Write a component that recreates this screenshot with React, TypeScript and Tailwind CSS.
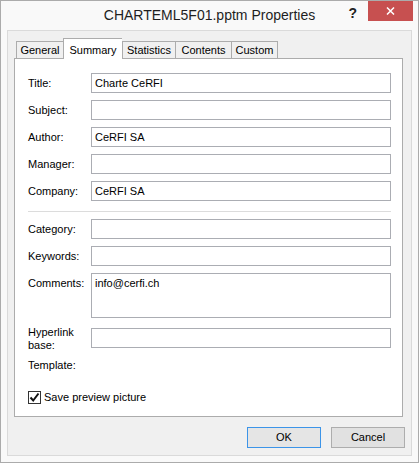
import React from "react"

const fields: { label: string; value?: string }[] = [
  { label: "Title:", value: "Charte CeRFI" },
  { label: "Subject:" },
  { label: "Author:", value: "CeRFI SA" },
  { label: "Manager:" },
  { label: "Company:", value: "CeRFI SA" },
]

const tabs = [
  { name: "General", w: "w-[47px]" },
  { name: "Summary", w: "w-[59px]", active: true },
  { name: "Statistics", w: "w-[53px]" },
  { name: "Contents", w: "w-[56px]" },
  { name: "Custom", w: "w-[47px]", last: true },
]

function Field({ label, value }: { label: string; value?: string }) {
  return (
    <div className="flex items-center h-[20px]">
      <div className="w-[63px] shrink-0">{label}</div>
      <div className="w-[300px] h-[20px] border border-[#abadb3] bg-white flex items-center px-[3px]">{value}</div>
    </div>
  )
}

export default function App() {
  return (
    <div
      className="w-[419px] h-[464px] bg-white text-[11px] text-black"
      style={{ fontFamily: '"Liberation Sans", Arial, sans-serif' }}
    >
      <div className="h-[463px] border border-[#ababab] bg-[#f9f9f9] flex flex-col px-[6px] pb-[6px]">
        {/* Title bar */}
        <div className="-mx-[6px] h-[29px] grid grid-cols-[1fr_auto_1fr]">
          <div />
          <div className="text-[14px] leading-[29px] text-[#1e1e1e]">CHARTEML5F01.pptm Properties</div>
          <div className="flex justify-end items-start pr-[5px]">
            <span className="mt-[4px] mr-[11px] text-[14px] font-bold text-[#222] leading-[16px]">?</span>
            <div className="w-[45px] h-[20px] bg-[#c75050] flex items-center justify-center">
              <svg width="9" height="8" viewBox="0 0 9 8">
                <path d="M1 0.5 L8 7.5 M8 0.5 L1 7.5" stroke="white" strokeWidth="1.5" />
              </svg>
            </div>
          </div>
        </div>

        {/* Client area */}
        <div className="flex-1 border border-[#dadada] bg-[#f0f0f0] flex flex-col pt-[7px]">
          <div className="flex items-end h-[20px] ml-[8px]">
            {tabs.map((t) =>
              t.active ? (
                <div
                  key={t.name}
                  className={`${t.w} h-[21px] -mb-px relative z-10 bg-white border-l border-t border-[#acacac] flex justify-center pt-[3px]`}
                >
                  {t.name}
                </div>
              ) : (
                <div
                  key={t.name}
                  className={`${t.w} h-[17px] bg-[#f0f0f0] border-l border-t border-[#acacac] ${t.last ? "border-r" : ""} flex justify-center items-center`}
                >
                  {t.name}
                </div>
              )
            )}
          </div>

          {/* Tab panel */}
          <div className="ml-[6px] w-[389px] h-[359px] border border-[#acacac] bg-white flex flex-col pt-[14px] pl-[13px]">
            <div className="flex flex-col gap-[7px]">
              {fields.map((f) => (
                <Field key={f.label} label={f.label} value={f.value} />
              ))}
            </div>
            <div className="mt-[10px] w-[363px] h-px bg-[#dcdcdc]" />
            <div className="mt-[7px] flex flex-col gap-[7px]">
              <Field label="Category:" />
              <Field label="Keywords:" />
              <div className="flex items-start">
                <div className="w-[63px] h-[20px] flex items-center shrink-0">Comments:</div>
                <div className="w-[300px] h-[45px] border border-[#abadb3] px-[3px] pt-[1px]">info@cerfi.ch</div>
              </div>
            </div>
            <div className="mt-[10px] flex flex-col gap-[7px]">
              <div className="flex items-start h-[20px]">
                <div className="w-[63px] h-[20px] -mt-[2px] leading-[13px] shrink-0">
                  Hyperlink
                  <br />
                  base:
                </div>
                <div className="w-[300px] h-[20px] border border-[#abadb3]" />
              </div>
              <div className="h-[20px] flex items-center">Template:</div>
            </div>
            <div className="mt-[12px] h-[20px] flex items-center gap-[3px]">
              <div className="w-[13px] h-[13px] border border-[#333] bg-white flex items-center justify-center">
                <svg width="11" height="11" viewBox="0 0 11 11">
                  <path d="M1.5 5.5 L4.2 8.5 L9.5 1.5" fill="none" stroke="#111" strokeWidth="2" />
                </svg>
              </div>
              <span>Save preview picture</span>
            </div>
          </div>

          {/* Buttons */}
          <div className="mt-[10px] flex justify-end gap-[10px] pr-[6px]">
            <button className="w-[74px] h-[21px] border border-[#3c94e8] bg-[#e5e5e5] text-[11px] flex items-center justify-center">
              OK
            </button>
            <button className="w-[74px] h-[21px] border border-[#adadad] bg-[#e1e1e1] text-[11px] flex items-center justify-center">
              Cancel
            </button>
          </div>
        </div>
      </div>
    </div>
  )
}
